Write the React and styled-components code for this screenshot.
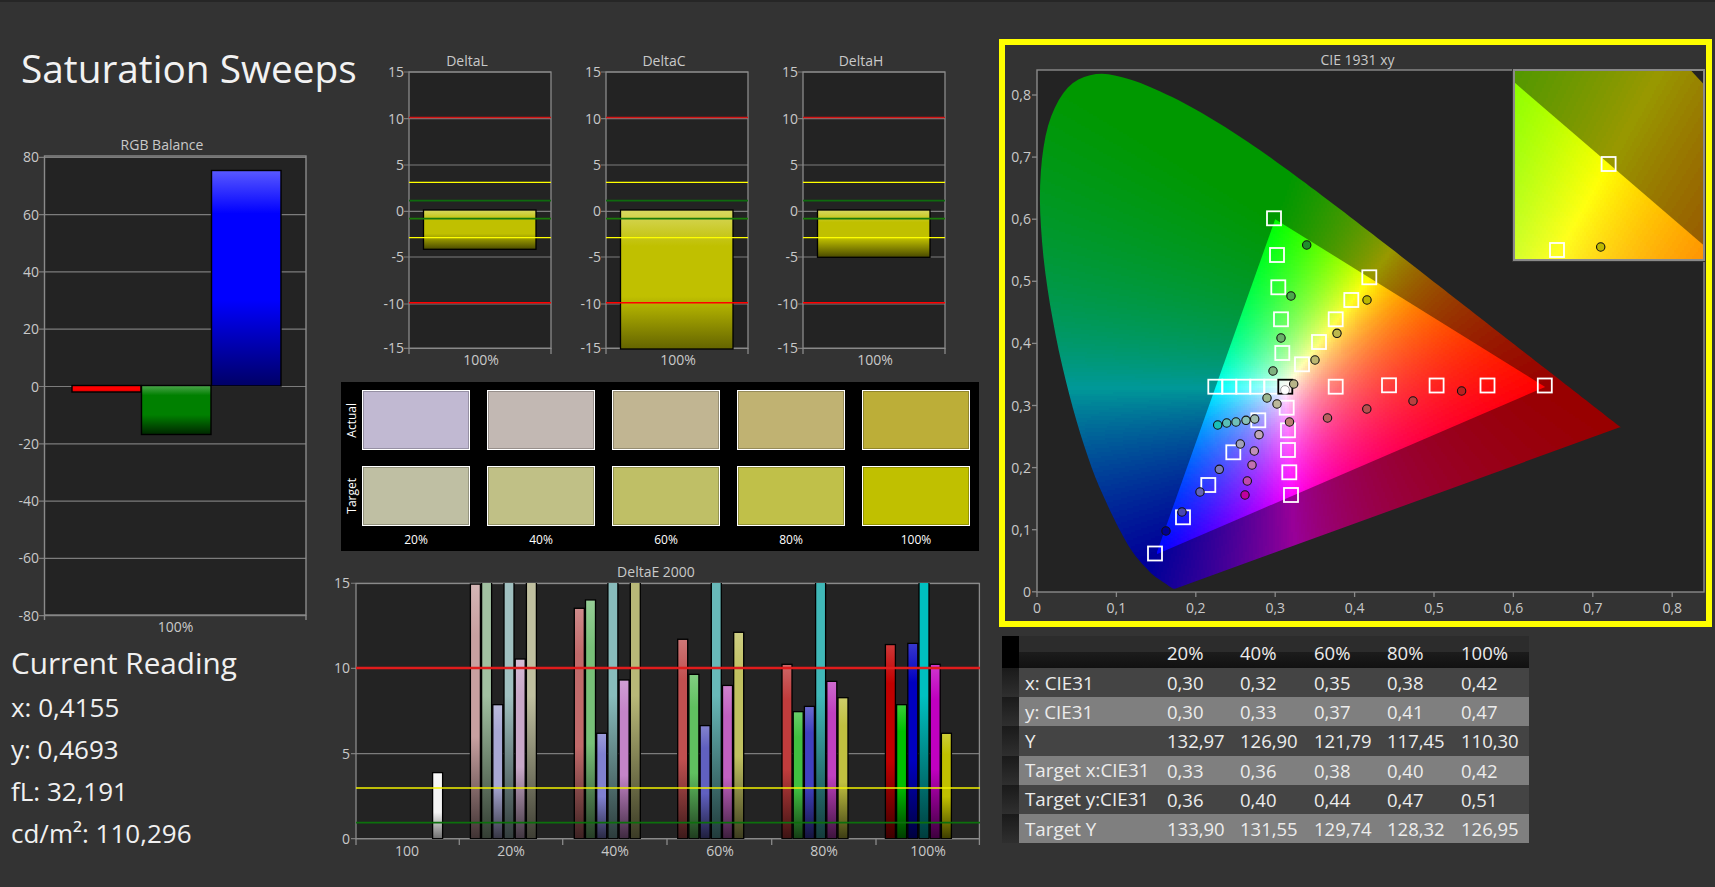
import React from 'react';
import styled, { createGlobalStyle } from 'styled-components';

const GlobalStyle = createGlobalStyle`
  html, body { margin: 0; padding: 0; background: #333333; }
  #root { width: 1715px; height: 887px; overflow: hidden; }
`;

const FONT = '"Open Sans", "Noto Sans", "Liberation Sans", sans-serif';

const Page = styled.div`
  display: flex;
  box-sizing: border-box;
  width: 1715px;
  height: 887px;
  overflow: hidden;
  background: #333333;
  border-top: 2px solid #262626;
  font-family: ${FONT};
`;

const LeftColumn = styled.div`
  width: 337px;
  flex: none;
  padding-top: 41px;
`;

const MiddleColumn = styled.div`
  width: 662px;
  flex: none;
  padding-top: 48px;
`;

const RightColumn = styled.div`
  width: 716px;
  flex: none;
  padding-top: 37px;
`;

const Title = styled.h1`
  margin: 0 0 42px 21px;
  font-size: 38.8px;
  line-height: 50px;
  font-weight: 400;
  color: #f2f2f2;
  white-space: nowrap;
`;

const Chart = styled.svg`
  display: block;
  flex: none;
  overflow: visible;
`;

const Readout = styled.div`
  margin-top: 8px;
  padding-left: 11px;
  color: #f0f0f0;
`;

const ReadoutTitle = styled.div`
  font-size: 29.7px;
  line-height: 40px;
  margin-bottom: 3px;
`;

const ReadoutLine = styled.div`
  font-size: 26px;
  line-height: 42px;
`;

const DeltaRow = styled.div`
  display: flex;
  margin-left: 28px;
`;

const SwatchPanel = styled.div`
  display: grid;
  grid-template-columns: 21px repeat(5, 125px);
  grid-template-rows: 60px 60px 24px;
  row-gap: 16px;
  box-sizing: border-box;
  width: 638px;
  height: 169px;
  margin: 10px 0 9px 4px;
  padding-top: 8px;
  background: #000000;
  color: #ffffff;
  font-size: 12px;
`;

const SideLabel = styled.div`
  writing-mode: vertical-rl;
  transform: rotate(180deg);
  justify-self: center;
  align-self: center;
  font-size: 12px;
  line-height: 14px;
`;

const Swatch = styled.div`
  box-sizing: border-box;
  width: 108px;
  height: 60px;
  border: 1px solid #ffffff;
  box-shadow: inset 0 0 0 1px rgba(0, 0, 0, 0.22);
  background: ${({ $color }) => $color};
`;

const SwatchCaption = styled.div`
  width: 108px;
  margin-top: -12px;
  text-align: center;
  line-height: 20px;
`;

const CieFrame = styled.div`
  box-sizing: border-box;
  width: 713px;
  height: 588px;
  border: 6px solid #ffff00;
  background: #333333;
`;

const ReadingsTable = styled.table`
  width: 527px;
  margin: 9px 0 0 3px;
  border-collapse: collapse;
  table-layout: fixed;
  font-size: 18.5px;
  color: #ececec;

  td, th {
    padding: 0;
    font-weight: 400;
    text-align: left;
    white-space: nowrap;
  }
`;

const HeadRow = styled.tr`
  height: 32px;
  background: linear-gradient(#2c2c2c 0, #2c2c2c 50%, #1c1c1c 50%, #111111 100%);
`;

const DataRow = styled.tr`
  height: 29.2px;
  background: ${({ $light }) => ($light ? '#7f7f7f' : '#444444')};
`;

const Gutter = styled.td`
  width: 17px;
  background: ${({ $head }) => ($head ? '#000000' : 'linear-gradient(#1a1a1a, #2f2f2f)')};
`;

const RowLabel = styled.td`
  width: 142px;
  && { padding-left: 6px; font-size: 18.8px; }
`;

const AxisText = styled.text`
  font-family: ${FONT};
  font-size: 14px;
  fill: #c9c9c9;
  text-anchor: ${({ $anchor }) => $anchor || 'middle'};
`;

/* ---- colour helpers ---- */

const hexToRgb = (hex) => [1, 3, 5].map((i) => parseInt(hex.slice(i, i + 2), 16));
const mix = (hex, target, t) => {
  const [r, g, b] = hexToRgb(hex);
  const m = (c) => Math.round(c + (target - c) * t);
  return `rgb(${m(r)},${m(g)},${m(b)})`;
};

const BarGradient = ({ id, color, light = 0.35, dark = 0.65, from = 0.2, to = 0.6 }) => (
  <linearGradient id={id} x1="0" y1="0" x2="0" y2="1">
    <stop offset="0" stopColor={mix(color, 255, light)} />
    <stop offset={from} stopColor={color} />
    <stop offset={to} stopColor={color} />
    <stop offset="1" stopColor={mix(color, 0, dark)} />
  </linearGradient>
);

const GRID = '#7c7c7c';
const EDGE = '#8a8a8a';
const PLOT_BG = '#232323';

/* ---- RGB balance ---- */

const RGB_TICKS = [80, 60, 40, 20, 0, -20, -40, -60, -80];

function RgbBalance() {
  const yOf = (v) => 386.5 - v * 2.865;
  return (
    <Chart width="337" height="500" viewBox="0 135 337 500">
      <defs>
        <BarGradient id="rgbR" color="#ff0000" light={0} dark={0.2} />
        <BarGradient id="rgbG" color="#008000" light={0.3} dark={0.7} />
        <BarGradient id="rgbB" color="#0000ff" light={0.35} dark={0.6} />
      </defs>
      <AxisText x="162" y="150">RGB Balance</AxisText>
      <rect x="44.5" y="156" width="261.5" height="459" fill={PLOT_BG} />
      {RGB_TICKS.map((t) => (
        <g key={t}>
          <line x1="39" x2="306" y1={yOf(t)} y2={yOf(t)} stroke={GRID} strokeWidth="1.2" />
          <AxisText $anchor="end" x="39" y={yOf(t) + 5}>{t}</AxisText>
        </g>
      ))}
      <rect x="44.5" y="156" width="261.5" height="459" fill="none" stroke={EDGE} strokeWidth="1.4" />
      <line x1="44.5" x2="44.5" y1="615" y2="620" stroke={EDGE} strokeWidth="1.4" />
      <line x1="306" x2="306" y1="615" y2="620" stroke={EDGE} strokeWidth="1.4" />
      <rect x="72" y="385.5" width="69" height="6.5" fill="url(#rgbR)" stroke="#000" strokeWidth="1.4" />
      <rect x="141.5" y="385.5" width="69.5" height="49" fill="url(#rgbG)" stroke="#000" strokeWidth="1.4" />
      <rect x="211.5" y="170.5" width="69.5" height="215.5" fill="url(#rgbB)" stroke="#000" strokeWidth="1.4" />
      <AxisText x="175.5" y="632">100%</AxisText>
    </Chart>
  );
}

/* ---- DeltaL / C / H ---- */

const DELTA_TICKS = [15, 10, 5, 0, -5, -10, -15];
const DELTA_Y = { 15: 72, 10: 118.7, 5: 165, 0: 211.3, '-5': 257, '-10': 304, '-15': 348.3 };

function DeltaChart({ id, title, plotX, bottom, dark = 0.62, fade = 0.6 }) {
  const right = plotX + 142;
  return (
    <Chart width="197" height="322" viewBox={`${plotX - 44} 50 197 322`}>
      <defs>
        <BarGradient id={id} color="#c0c000" light={0.38} dark={dark} from={0.26} to={fade} />
      </defs>
      <AxisText x={plotX + 58} y="66">{title}</AxisText>
      <rect x={plotX} y="72" width="142" height="276.3" fill={PLOT_BG} />
      {DELTA_TICKS.map((t) => (
        <g key={t}>
          <line x1={plotX - 5} x2={right} y1={DELTA_Y[t]} y2={DELTA_Y[t]} stroke={GRID} strokeWidth="1.2" />
          <AxisText $anchor="end" x={plotX - 5} y={DELTA_Y[t] + 5}>{t}</AxisText>
        </g>
      ))}
      <rect x={plotX} y="72" width="142" height="276.3" fill="none" stroke={EDGE} strokeWidth="1.3" />
      <line x1={plotX} x2={plotX} y1="348" y2="354" stroke={EDGE} strokeWidth="1.3" />
      <line x1={right} x2={right} y1="348" y2="354" stroke={EDGE} strokeWidth="1.3" />
      <rect x={plotX + 14.5} y="210" width="112.5" height={bottom - 210} fill={`url(#${id})`} stroke="#000" strokeWidth="1.3" />
      <line x1={plotX} x2={right} y1="117.5" y2="117.5" stroke="#d01414" strokeWidth="1.3" />
      <line x1={plotX} x2={right} y1="302.7" y2="302.7" stroke="#ff0000" strokeWidth="1.5" />
      <line x1={plotX} x2={right} y1="182.3" y2="182.3" stroke="#ffff00" strokeWidth="1.3" />
      <line x1={plotX} x2={right} y1="237.7" y2="237.7" stroke="#ffff00" strokeWidth="1.3" />
      <line x1={plotX} x2={right} y1="200.7" y2="200.7" stroke="#0e6a0e" strokeWidth="1.8" />
      <line x1={plotX} x2={right} y1="218.7" y2="218.7" stroke="#1a7a0a" strokeWidth="1.8" />
      <AxisText x={plotX + 72} y="365">100%</AxisText>
    </Chart>
  );
}

/* ---- swatches ---- */

const ACTUAL = ['#c1b9d2', '#c2b8b3', '#c1b592', '#c0b272', '#bcae38'];
const TARGET = ['#bfbfa3', '#c0c086', '#bfbf66', '#c0c049', '#c0c000'];
const LEVELS = ['20%', '40%', '60%', '80%', '100%'];

/* ---- DeltaE ---- */

const CLIP = 21;
const DE_GROUPS = [
  { x: 470.4, colors: ['#c8a0a0', '#a0c0a0', '#a8a8d4', '#a0c0c0', '#c8a8c8', '#c0c0a0'], values: [14.95, CLIP, 7.87, CLIP, 10.55, CLIP] },
  { x: 574.3, colors: ['#c06a6a', '#78c078', '#8080d0', '#88bcbc', '#c484c8', '#b8b878'], values: [13.53, 14.02, 6.19, CLIP, 9.32, CLIP] },
  { x: 677.7, colors: ['#c05050', '#60c060', '#6060c0', '#68b8b8', '#c060c0', '#c0c060'], values: [11.71, 9.65, 6.64, CLIP, 9.0, 12.12] },
  { x: 782, colors: ['#c03c3c', '#40c040', '#4040c0', '#40b8b8', '#c040c0', '#c0c040'], values: [10.24, 7.46, 7.77, CLIP, 9.24, 8.28] },
  { x: 885.4, colors: ['#c00000', '#00c000', '#0000c0', '#00c0c0', '#c000c0', '#c0c000'], values: [11.4, 7.87, 11.47, CLIP, 10.24, 6.19] },
];
const DE_TICK_X = [356, 459.3, 562.7, 667, 771.7, 876, 979.4];
const DE_LABELS = [['100', 407], ['20%', 511], ['40%', 615], ['60%', 720], ['80%', 824], ['100%', 928]];

function DeltaE() {
  const yOf = (v) => 838.7 - v * 17.03;
  return (
    <Chart width="662" height="297" viewBox="337 560 662 297">
      <defs>
        <BarGradient id="de-white" color="#f4f4f4" light={0.4} dark={0.55} />
        {DE_GROUPS.map((g, i) =>
          g.colors.map((c, j) => <BarGradient key={`${i}${j}`} id={`de-${i}-${j}`} color={c} light={0.22} dark={0.68} />)
        )}
        <clipPath id="de-clip">
          <rect x="356" y="583" width="624" height="256" />
        </clipPath>
      </defs>
      <AxisText x="656" y="577">DeltaE 2000</AxisText>
      <rect x="356" y="583.5" width="623.4" height="255.2" fill={PLOT_BG} />
      {[15, 10, 5, 0].map((t) => (
        <g key={t}>
          <line x1="351" x2="979.4" y1={yOf(t)} y2={yOf(t)} stroke={GRID} strokeWidth="1.2" />
          <AxisText $anchor="end" x="350" y={yOf(t) + 5}>{t}</AxisText>
        </g>
      ))}
      <rect x="356" y="583.5" width="623.4" height="255.2" fill="none" stroke={EDGE} strokeWidth="1.3" />
      {DE_TICK_X.map((x) => (
        <line key={x} x1={x} x2={x} y1="838.7" y2="845" stroke={EDGE} strokeWidth="1.3" />
      ))}
      <g clipPath="url(#de-clip)" stroke="#000" strokeWidth="1.3">
        <rect x="432.6" y={yOf(3.88)} width="10" height={3.88 * 17.03} fill="url(#de-white)" />
        {DE_GROUPS.map((g, i) =>
          g.values.map((v, j) => (
            <rect
              key={`${i}${j}`}
              x={g.x + j * 11.2}
              y={yOf(v)}
              width="10"
              height={v * 17.03}
              fill={`url(#de-${i}-${j})`}
            />
          ))
        )}
      </g>
      <line x1="356" x2="980" y1="668" y2="668" stroke="#e01c1c" strokeWidth="2.6" />
      <line x1="356" x2="980" y1="788" y2="788" stroke="#f2f200" strokeWidth="1.6" />
      <line x1="356" x2="980" y1="822.7" y2="822.7" stroke="#0c700c" strokeWidth="1.8" />
      {DE_LABELS.map(([label, x]) => (
        <AxisText key={label} x={x} y="856">{label}</AxisText>
      ))}
    </Chart>
  );
}

/* ---- CIE diagram ---- */

const LOCUS_KNOTS = [
  [0.1741, 0.005], [0.1714, 0.0051], [0.1689, 0.0069], [0.1644, 0.0109], [0.1566, 0.0177], [0.144, 0.0297],
  [0.1241, 0.0578], [0.1096, 0.0868], [0.0913, 0.1327], [0.0687, 0.2007], [0.0454, 0.295], [0.0235, 0.4127],
  [0.0082, 0.5384], [0.0039, 0.6548], [0.0139, 0.7502], [0.0389, 0.812], [0.0743, 0.8338], [0.1142, 0.8262],
  [0.1547, 0.8059], [0.1929, 0.7816], [0.2296, 0.7543], [0.2658, 0.7243], [0.3016, 0.6923], [0.3373, 0.6589],
  [0.3731, 0.6245], [0.4087, 0.5896], [0.4441, 0.5547], [0.4788, 0.5202], [0.5125, 0.4866], [0.5448, 0.4544],
  [0.5752, 0.4242], [0.6029, 0.3965], [0.627, 0.3725], [0.6482, 0.3514], [0.6658, 0.334], [0.6915, 0.3083],
  [0.7079, 0.292], [0.719, 0.2809], [0.726, 0.274], [0.7347, 0.2653],
];

// catmull-rom through the table so the horseshoe has no corners
const LOCUS = LOCUS_KNOTS.flatMap((p1, i) => {
  const p0 = LOCUS_KNOTS[Math.max(i - 1, 0)];
  const p2 = LOCUS_KNOTS[Math.min(i + 1, LOCUS_KNOTS.length - 1)];
  const p3 = LOCUS_KNOTS[Math.min(i + 2, LOCUS_KNOTS.length - 1)];
  return [0, 0.2, 0.4, 0.6, 0.8].map((t) =>
    [0, 1].map((k) =>
      0.5 * (2 * p1[k] + (p2[k] - p0[k]) * t + (2 * p0[k] - 5 * p1[k] + 4 * p2[k] - p3[k]) * t * t +
        (3 * p1[k] - p0[k] - 3 * p2[k] + p3[k]) * t * t * t)
    )
  );
});
const GAMUT = [[0.3, 0.6], [0.64, 0.33], [0.15, 0.06]];

const xyToRgb = (x, yIn, dim) => {
  const y = Math.max(yIn, 0.001);
  const X = x / y;
  const Z = (1 - x - y) / y;
  const lin = [
    3.2406 * X - 1.5372 - 0.4986 * Z,
    -0.9689 * X + 1.8758 + 0.0415 * Z,
    0.0557 * X - 0.204 + 1.057 * Z,
  ].map((c) => Math.max(c, 0));
  const top = Math.max(lin[0], lin[1], lin[2], 1e-6);
  return lin.map((c) => Math.round(((c / top) * 255 * dim) / 4) * 4);
};

const inPoly = (x, y, poly) => {
  let hit = false;
  for (let i = 0, j = poly.length - 1; i < poly.length; j = i++) {
    const [xi, yi] = poly[i];
    const [xj, yj] = poly[j];
    if (yi > y !== yj > y && x < ((xj - xi) * (y - yi)) / (yj - yi) + xi) hit = !hit;
  }
  return hit;
};

// one path per quantised colour, so the gradient stays a handful of svg nodes
function buildCells({ poly, dim, toXy, x0, y0, x1, y1, cell }) {
  const buckets = new Map();
  for (let py = y0; py < y1; py += cell) {
    for (let px = x0; px < x1; px += cell) {
      const near = [[1, 1], [-3, 1], [5, 1], [1, -3], [1, 5]].some(([dx, dy]) => {
        const [x, y] = toXy(px + dx, py + dy);
        return inPoly(x, y, poly);
      });
      if (!near) continue;
      const [x, y] = toXy(px + cell / 2, py + cell / 2);
      const [r, g, b] = xyToRgb(x, y, dim);
      const key = `rgb(${Math.min(r, 255)},${Math.min(g, 255)},${Math.min(b, 255)})`;
      buckets.set(key, (buckets.get(key) || '') + `M${px} ${py}h${cell}v${cell}h-${cell}z`);
    }
  }
  return [...buckets.entries()];
}

const plotXy = (px, py) => [(px - 1037) / 794, (591.8 - py) / 621];
const sx = (x) => 1037 + x * 794;
const sy = (y) => 591.8 - y * 621;
const insetXy = (px, py) => [0.3775 + (px - 1514) / 2263, 0.5434 - (py - 70) / 2450];
const insetX = (x) => 1514 + (x - 0.3775) * 2263;
const insetY = (y) => 70 + (0.5434 - y) * 2450;

const polyPoints = (poly, fx, fy) => poly.map(([x, y]) => `${fx(x).toFixed(1)},${fy(y).toFixed(1)}`).join(' ');

const OUTER = buildCells({ poly: LOCUS, dim: 0.6, toXy: plotXy, x0: 1037, y0: 70, x1: 1630, y1: 592, cell: 2 });
const INNER = buildCells({ poly: GAMUT, dim: 1, toXy: plotXy, x0: 1145, y0: 214, x1: 1555, y1: 556, cell: 2 });
const INSET_OUTER = buildCells({ poly: LOCUS, dim: 0.6, toXy: insetXy, x0: 1514, y0: 70, x1: 1704, y1: 260, cell: 2 });
const INSET_INNER = buildCells({ poly: GAMUT, dim: 1, toXy: insetXy, x0: 1514, y0: 70, x1: 1704, y1: 260, cell: 2 });

const TARGETS = [
  [1274, 218.3], [1277, 255], [1278.3, 287.3], [1281, 319.3], [1282.3, 353],
  [1369.3, 277.3], [1351.3, 300], [1335.7, 319.3], [1319, 342], [1302, 364.3],
  [1215.3, 386.7], [1229.3, 386.7], [1243.3, 386.7], [1257.3, 386.7], [1271.3, 386.7],
  [1335.7, 386.7], [1389, 385.3], [1436.6, 385.5], [1487.5, 385.5], [1544.8, 385.5],
  [1286.7, 407.7], [1288, 430.3], [1288, 450], [1289.3, 472.3], [1291, 495],
  [1258.3, 420.3], [1233.3, 452.3], [1208.3, 485], [1183, 517.3], [1155, 553.5],
];

const READINGS = [
  [1306.7, 245, '#1f8f2a'], [1291, 296, '#4ba84b'], [1281, 338, '#69b069'], [1273, 371, '#7fb07f'], [1267, 398, '#9cb890'],
  [1367, 300, '#bcb800'], [1337, 333.3, '#bcb84c'], [1315, 360, '#bcb870'], [1293.7, 384, '#b8b488'], [1277, 404, '#bcb89c'],
  [1461.6, 391, '#b82020'], [1413, 401, '#b84040'], [1366.8, 409, '#b85050'], [1327.5, 418, '#b86060'], [1289.5, 422, '#b88070'],
  [1217.7, 425, '#18c0b8'], [1226.7, 423, '#58c0b8'], [1236, 422, '#70c0b8'], [1246, 420.3, '#88c0b8'], [1254.7, 419, '#a0bcb0'],
  [1245, 495, '#c000a0'], [1247.3, 481, '#c048b0'], [1252, 465, '#c070b0'], [1254.3, 451, '#c090b8'], [1259, 434.7, '#c0a8b8'],
  [1166, 531, '#000090'], [1182, 512, '#4848b0'], [1200, 492, '#6464b8'], [1219.3, 469.3, '#7c7cb8'], [1240.3, 444, '#a0a0b8'],
];

const CIE_X = ['0', '0,1', '0,2', '0,3', '0,4', '0,5', '0,6', '0,7', '0,8'];
const CIE_Y = ['0,8', '0,7', '0,6', '0,5', '0,4', '0,3', '0,2', '0,1', '0'];

const Cells = ({ cells }) => (
  <g shapeRendering="crispEdges">
    {cells.map(([fill, d]) => <path key={fill} fill={fill} d={d} />)}
  </g>
);

const Marker = ({ x, y, color = '#ffffff' }) => (
  <rect x={x - 7} y={y - 7} width="14" height="14" fill="none" stroke={color} strokeWidth="1.8" />
);

const Dot = ({ x, y, fill }) => <circle cx={x} cy={y} r="4.2" fill={fill} stroke="#111" strokeWidth="1.1" />;

function CieDiagram() {
  return (
    <Chart width="701" height="576" viewBox="1005 45 701 576">
      <defs>
        <clipPath id="locus"><polygon points={polyPoints(LOCUS, sx, sy)} /></clipPath>
        <clipPath id="gamut"><polygon points={polyPoints(GAMUT, sx, sy)} /></clipPath>
        <clipPath id="inset-box"><rect x="1514" y="70" width="190" height="190" /></clipPath>
        <clipPath id="inset-locus"><polygon points={polyPoints(LOCUS, insetX, insetY)} /></clipPath>
        <clipPath id="inset-gamut"><polygon points={polyPoints(GAMUT, insetX, insetY)} /></clipPath>
      </defs>
      <AxisText x="1357.5" y="65">CIE 1931 xy</AxisText>
      <rect x="1037" y="70" width="667" height="522" fill={PLOT_BG} />
      <g clipPath="url(#locus)"><Cells cells={OUTER} /></g>
      <g clipPath="url(#gamut)"><Cells cells={INNER} /></g>
      <rect x="1037" y="70" width="667" height="522" fill="none" stroke={EDGE} strokeWidth="1.4" />
      {CIE_Y.map((label, i) => {
        const y = sy(0.8 - i * 0.1);
        return (
          <g key={label}>
            <line x1="1032" x2="1037" y1={y} y2={y} stroke={EDGE} strokeWidth="1.3" />
            <AxisText $anchor="end" x="1031" y={y + 5}>{label}</AxisText>
          </g>
        );
      })}
      {CIE_X.map((label, i) => {
        const x = sx(i * 0.1);
        return (
          <g key={label}>
            <line x1={x} x2={x} y1="592" y2="597" stroke={EDGE} strokeWidth="1.3" />
            <AxisText x={x} y="613">{label}</AxisText>
          </g>
        );
      })}
      {TARGETS.map(([x, y]) => <Marker key={`${x}-${y}`} x={x} y={y} />)}
      <rect x="1278.3" y="379.7" width="14" height="14" fill="#f4f4f4" fillOpacity="0.55" stroke="#000" strokeWidth="1.8" />
      {READINGS.map(([x, y, fill]) => <Dot key={`${x}-${y}`} x={x} y={y} fill={fill} />)}
      <circle cx="1285" cy="390" r="4.4" fill="#ffffff" stroke="#888" strokeWidth="0.8" />

      <rect x="1512" y="68" width="194" height="194" fill="#333333" />
      <g clipPath="url(#inset-box)">
        <rect x="1514" y="70" width="190" height="190" fill={PLOT_BG} />
        <g clipPath="url(#inset-locus)"><Cells cells={INSET_OUTER} /></g>
        <g clipPath="url(#inset-gamut)"><Cells cells={INSET_INNER} /></g>
        <Marker x={1608.6} y={164} />
        <Marker x={1557} y={250} />
        <Dot x={1600.7} y={247} fill="#bcb800" />
      </g>
      <rect x="1514" y="70" width="190" height="190" fill="none" stroke={EDGE} strokeWidth="2" />
    </Chart>
  );
}

/* ---- table ---- */

const ROWS = [
  ['x: CIE31', '0,30', '0,32', '0,35', '0,38', '0,42'],
  ['y: CIE31', '0,30', '0,33', '0,37', '0,41', '0,47'],
  ['Y', '132,97', '126,90', '121,79', '117,45', '110,30'],
  ['Target x:CIE31', '0,33', '0,36', '0,38', '0,40', '0,42'],
  ['Target y:CIE31', '0,36', '0,40', '0,44', '0,47', '0,51'],
  ['Target Y', '133,90', '131,55', '129,74', '128,32', '126,95'],
];

export default function App() {
  return (
    <>
      <GlobalStyle />
      <Page>
        <LeftColumn>
          <Title>Saturation Sweeps</Title>
          <RgbBalance />
          <Readout>
            <ReadoutTitle>Current Reading</ReadoutTitle>
            <ReadoutLine>x: 0,4155</ReadoutLine>
            <ReadoutLine>y: 0,4693</ReadoutLine>
            <ReadoutLine>fL: 32,191</ReadoutLine>
            <ReadoutLine>cd/m²: 110,296</ReadoutLine>
          </Readout>
        </LeftColumn>

        <MiddleColumn>
          <DeltaRow>
            <DeltaChart id="deltaL" title="DeltaL" plotX={409} bottom={249.3} />
            <DeltaChart id="deltaC" title="DeltaC" plotX={606} bottom={349} dark={0.48} fade={0.62} />
            <DeltaChart id="deltaH" title="DeltaH" plotX={803} bottom={257.3} />
          </DeltaRow>
          <SwatchPanel>
            <SideLabel>Actual</SideLabel>
            {ACTUAL.map((c) => <Swatch key={c} $color={c} />)}
            <SideLabel>Target</SideLabel>
            {TARGET.map((c) => <Swatch key={c} $color={c} />)}
            <div />
            {LEVELS.map((l) => <SwatchCaption key={l}>{l}</SwatchCaption>)}
          </SwatchPanel>
          <DeltaE />
        </MiddleColumn>

        <RightColumn>
          <CieFrame>
            <CieDiagram />
          </CieFrame>
          <ReadingsTable>
            <colgroup>
              <col style={{ width: 17 }} />
              <col style={{ width: 148 }} />
              <col style={{ width: 73 }} />
              <col style={{ width: 74 }} />
              <col style={{ width: 73 }} />
              <col style={{ width: 74 }} />
              <col style={{ width: 68 }} />
            </colgroup>
            <thead>
              <HeadRow>
                <Gutter as="th" $head />
                <th />
                {LEVELS.map((l) => <th key={l}>{l}</th>)}
              </HeadRow>
            </thead>
            <tbody>
              {ROWS.map(([label, ...cells], i) => (
                <DataRow key={label} $light={i % 2 === 1}>
                  <Gutter />
                  <RowLabel>{label}</RowLabel>
                  {cells.map((c, j) => <td key={j}>{c}</td>)}
                </DataRow>
              ))}
            </tbody>
          </ReadingsTable>
        </RightColumn>
      </Page>
    </>
  );
}
